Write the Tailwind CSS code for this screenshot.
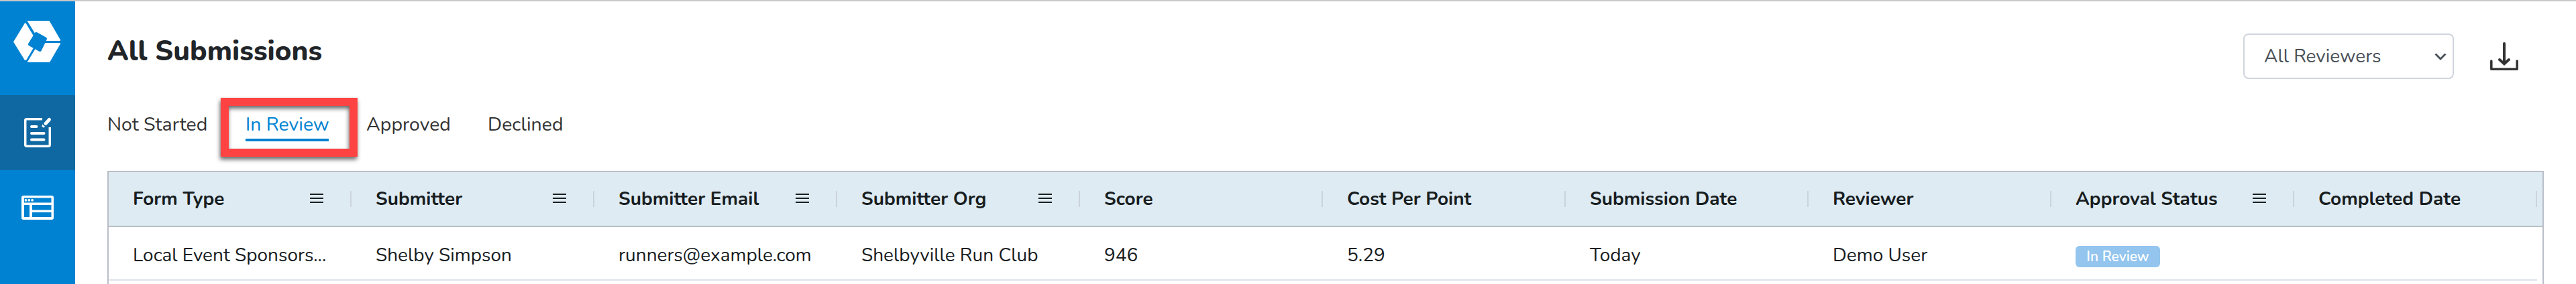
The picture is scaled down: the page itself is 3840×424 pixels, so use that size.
<!DOCTYPE html>
<html lang="en">
<head>
  <meta charset="UTF-8">
  <meta name="viewport" content="width=device-width, initial-scale=1.0">
  <title>All Submissions</title>
  <script src="https://cdn.jsdelivr.net/npm/@tailwindcss/browser@4"></script>
</head>
<body class="h-[424px] overflow-hidden flex flex-col bg-white border-t-2 border-[#c8c8c8] font-['Nunito','Open_Sans',sans-serif] text-[28px] text-[#181d1f]">
  <div class="flex flex-1 min-h-0">

    <!-- Sidebar -->
    <nav class="w-28 shrink-0 bg-[#0082d2] flex flex-col">
      <a href="#" class="h-[140px] shrink-0">
        <svg class="w-28 h-[140px]" viewBox="0 2 112 140" fill="#fff">
          <path d="M20 62.5 37 34.5 38.5 34.5 52 57V68L39 90H37Z"/>
          <path d="M40.5 31H73.5L90 59.5V61H66L55 54.5Z"/>
          <path d="M66 64H90V65.5L74 93H40.5L55 69Z"/>
          <path d="M54 50.5 67.5 58 59.5 74.5 44.5 66Z" fill="#0082d2" stroke="#0082d2" stroke-width="5" stroke-linejoin="round"/>
        </svg>
      </a>
      <a href="#" class="h-28 shrink-0 bg-[#1068a2]">
        <svg class="size-28" viewBox="0 142 112 112" fill="none" stroke="#fff" stroke-width="3.5">
          <path d="M63 177.7H40q-2.3 0-2.3 2.3V216q0 2.3 2.3 2.3H72q2.3 0 2.3-2.3V190"/>
          <path d="M47 189H54.5M47 199H65.5M47 208.5H65.5" stroke-width="4" stroke-linecap="round"/>
          <path d="M68 184.5 73.5 178.5" stroke-width="5" stroke-linecap="round"/>
          <path d="M63 185.5 67.5 189.5 64.5 190.5 62.5 189Z" fill="#fff" stroke="none"/>
        </svg>
      </a>
      <a href="#" class="h-28 shrink-0">
        <svg class="size-28" viewBox="0 254 112 112">
          <rect x="32" y="292" width="48" height="36" rx="3" fill="#fff"/>
          <path d="M36 295.5H76.5V302.5H36ZM36 306H44V324H36ZM48 306H76.5V313.5H48ZM48 317H76.5V324H48Z" fill="#0082d2"/>
          <g fill="#fff"><circle cx="38.5" cy="298.8" r="1.9"/><circle cx="43.3" cy="298.8" r="1.9"/><circle cx="48.1" cy="298.8" r="1.9"/></g>
        </svg>
      </a>
    </nav>

    <main class="flex-1 pl-12 pr-12 flex flex-col">
      <div class="h-[143px] shrink-0 flex justify-between">
        <h1 class="pt-[45px] text-[42px] leading-[60px] font-extrabold text-[#212529]">All Submissions</h1>
        <div class="flex items-start pt-12 pr-[38px]">
          <button class="w-[314px] h-[68px] flex items-center justify-between pl-[29px] pr-[9px] border-2 border-[#cfd5dc] rounded-lg text-[#495057]">
            <span>All Reviewers</span>
            <svg class="w-[18px] h-3 mt-0.5" viewBox="0 0 18 12" fill="none" stroke="#495057" stroke-width="2.8"><path d="M1.5 1.5 9 9 16.5 1.5"/></svg>
          </button>
          <button class="ml-[54px] mt-[13px]">
            <svg class="w-[42px] h-[42px]" viewBox="0 0 42 42" fill="none" stroke="#333" stroke-width="3.5">
              <path d="M1.8 28V40.2H40.2V28" stroke-linecap="round" stroke-linejoin="round"/>
              <path d="M21 2V32M14 26 21 32.3 28 26" stroke-width="4" stroke-linecap="round"/>
            </svg>
          </button>
        </div>
      </div>

      <!-- Tabs -->
      <div class="h-[110px] shrink-0 flex items-start pt-[21px] text-[28.5px] leading-[40px] text-[#333] whitespace-nowrap">
        <a href="#" class="w-[149px]">Not Started</a>
        <a href="#" class="relative ml-[57px] w-[124px] h-[45px] border-b-4 border-[#0082d2] text-[#0082d2]">
          In Review
          <span class="absolute -left-[37px] -top-5 w-[204px] h-[88px] border-[12px] border-[#ff4242] drop-shadow-[-1px_4px_3px_rgba(0,0,0,0.6)]"></span>
        </a>
        <a href="#" class="ml-14 w-[126px]">Approved</a>
        <a href="#" class="ml-[55px]">Declined</a>
      </div>

      <!-- Submissions grid -->
      <div class="w-[3632px] h-[180px] border-2 border-b-0 border-[#babfc7] leading-[38px] whitespace-nowrap">
        <div id="head" class="h-[82px] flex bg-[#deebf3] border-b-2 border-[#babfc7] font-bold"></div>
        <div id="row" class="w-[3620px] h-20 flex border-b-2 border-[#dde2eb]"></div>
      </div>
    </main>
  </div>

  <script>
    // title, has menu, value
    const columns = [
      ['Form Type', true, 'Local Event Sponsors...'],
      ['Submitter', true, 'Shelby Simpson'],
      ['Submitter Email', true, 'runners@example.com'],
      ['Submitter Org', true, 'Shelbyville Run Club'],
      ['Score', false, '946'],
      ['Cost Per Point', false, '5.29'],
      ['Submission Date', false, 'Today'],
      ['Reviewer', false, 'Demo User'],
      ['Approval Status', true, 'In Review'],
      ['Completed Date', false, '']
    ];
    const menu = '<svg class="w-5 h-3.5 -mt-0.5" viewBox="0 0 20 14" fill="#181d1f"><path d="M0 0h20v2H0zM0 6h20v2H0zM0 12h20v2H0z"/></svg>';

    document.getElementById('head').innerHTML = columns.map(c => `
      <div class="w-[362px] h-20 shrink-0 pl-9 flex items-center">
        <span class="flex-1">${c[0]}</span>
        ${c[1] ? menu : ''}
        <i class="ml-10 w-0.5 h-6 bg-[#cbd3db]"></i>
      </div>`).join('');

    document.getElementById('row').innerHTML = columns.map(c => c[0] === 'Approval Status'
      ? `<div class="w-[362px] shrink-0 pl-9 pt-7"><span class="block w-[126px] h-8 rounded-md bg-[#93c5ee] text-white text-center text-[21px] leading-8 font-semibold">${c[2]}</span></div>`
      : `<div class="w-[362px] shrink-0 pl-9 pt-[23px]">${c[2]}</div>`).join('');
  </script>
</body>
</html>
